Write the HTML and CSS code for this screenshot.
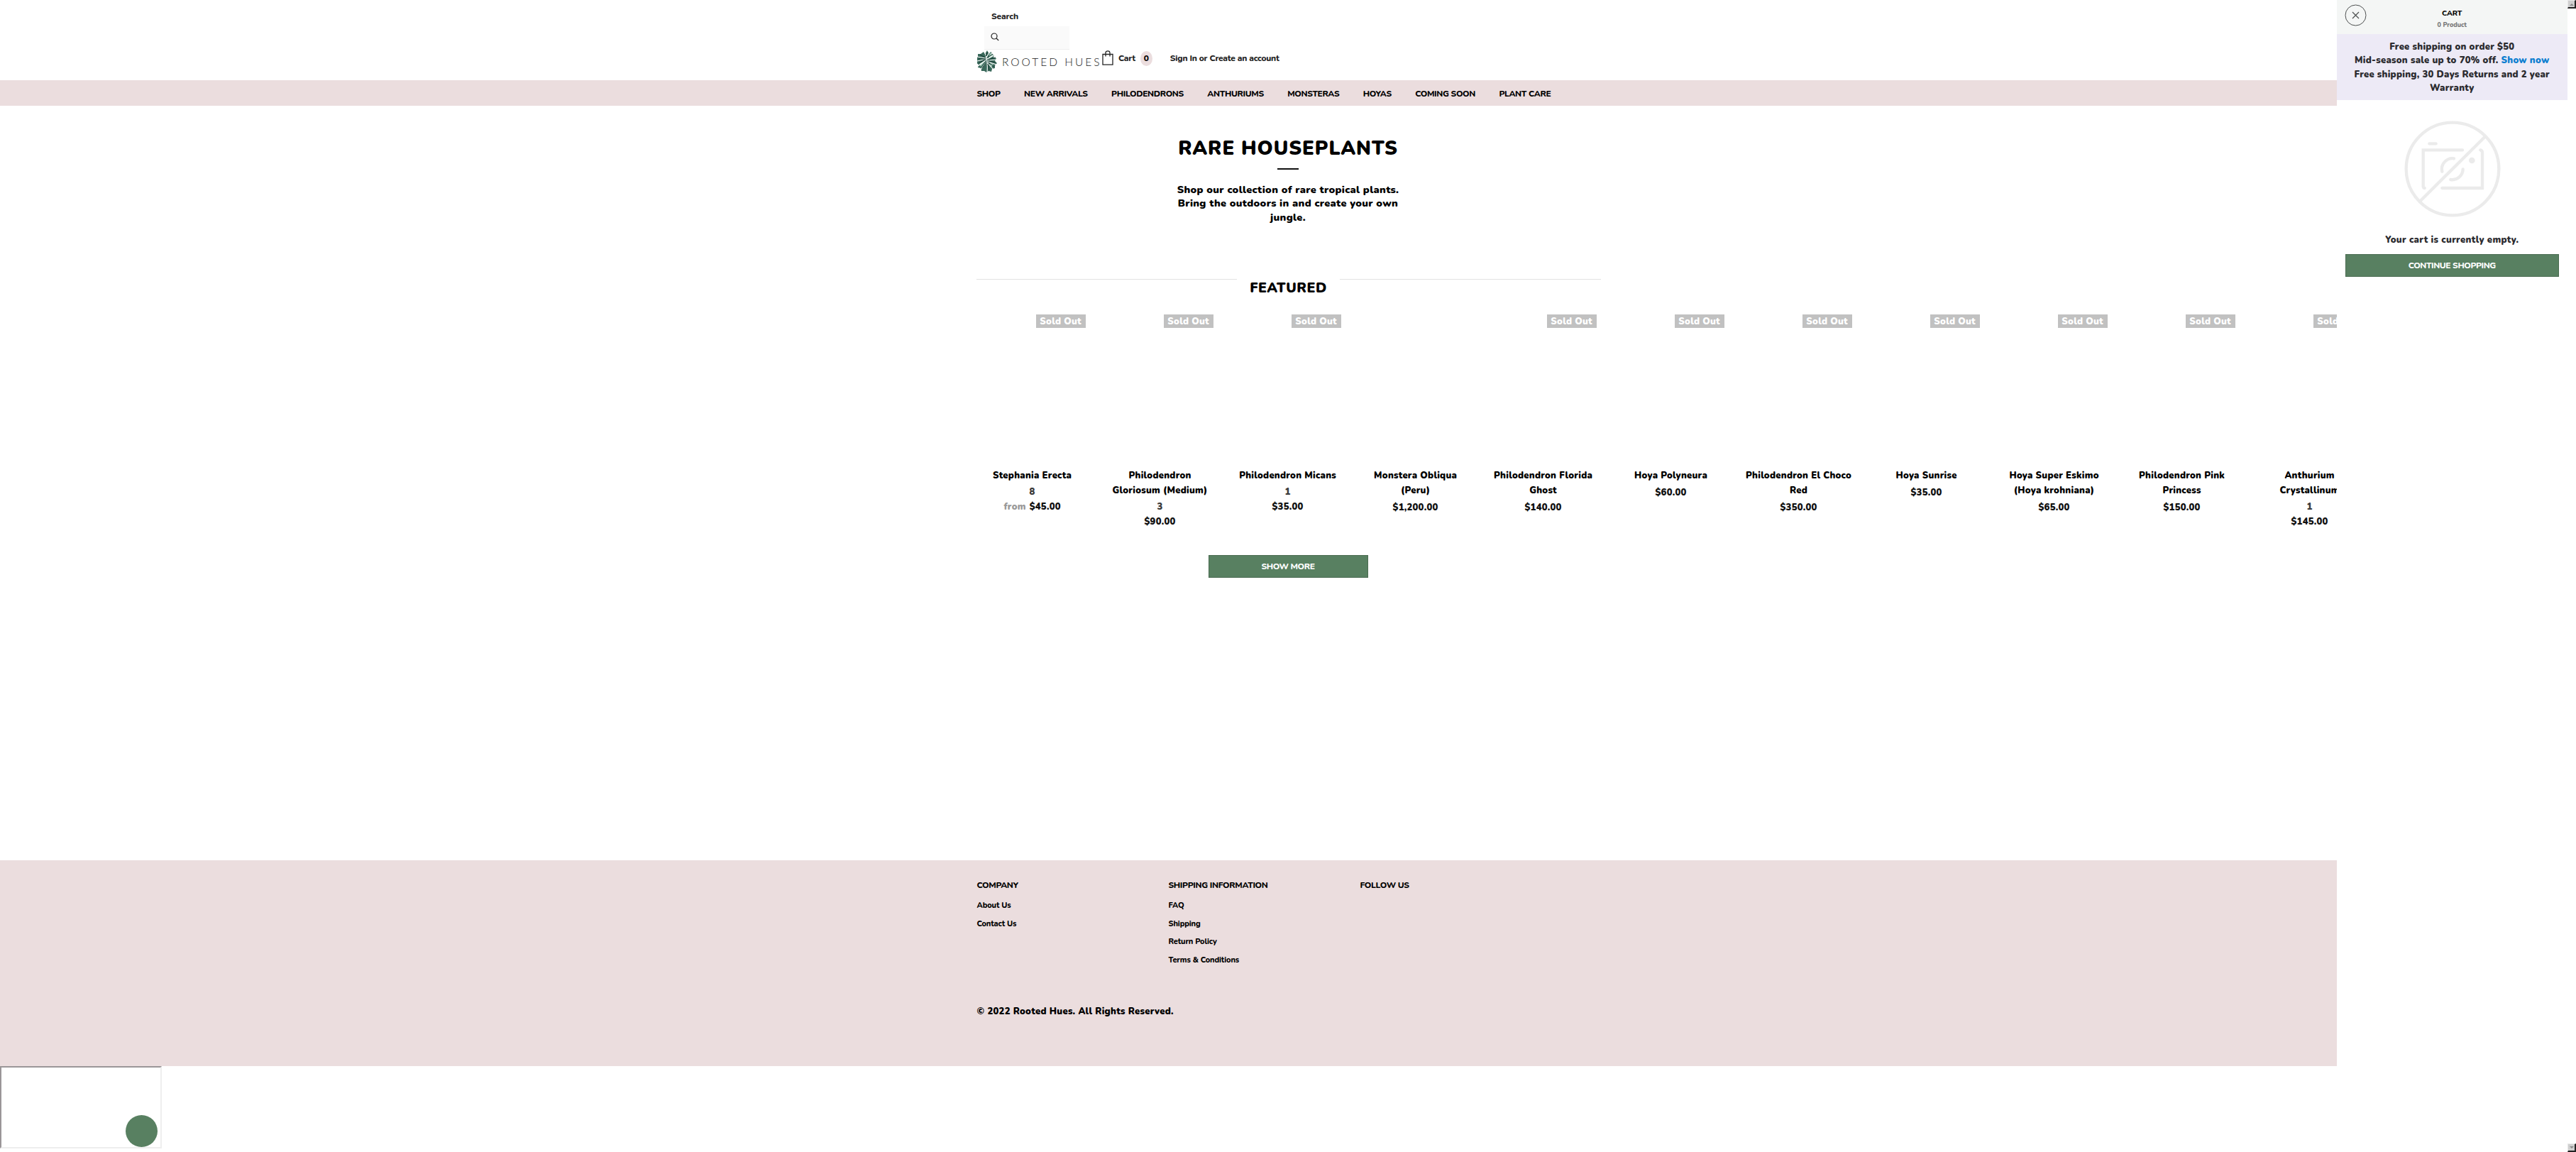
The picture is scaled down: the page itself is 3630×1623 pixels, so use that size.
FILE: index.html
```html
<!DOCTYPE html>
<html lang="en">
<head>
<meta charset="utf-8">
<title>Rooted Hues</title>
<link rel="stylesheet" href="styles.css">
</head>
<body>
<div class="layout">
  <div class="site">
    <header class="header">
      <div class="search">
        <div class="search-label">Search</div>
        <div class="search-field">
          <svg width="12" height="12" viewBox="0 0 12 12" fill="none" stroke="#222" stroke-width="1.2"><circle cx="5" cy="5" r="4"/><path d="M8 8l3.2 3"/></svg>
        </div>
      </div>
      <div class="header-row">
        <a class="logo">
          <svg width="28" height="31" viewBox="0 0 28 31">
            <path fill="#3a695b" d="M9 2l2 3 3-5 2 4 4-2 0 4 4 0-1 4 4 1-2 4 3 3-3 3 0 4-4 1-1 4-4-1-3 2-3-2-4 0-1-4-4-1 1-4-4-3 2-3-2-4 3-1 0-4 4 0z"/>
            <path fill="#a9cdbd" d="M18 3l5 5-7 4zM3 19l9-5-7 9zM19 24l4-4-5-3z"/>
            <path fill="none" stroke="#fff" stroke-width="1.1" d="M10 2c4 7 5 16 4 29M0 9l12 2M0 15l13-3M1 22l11-8M5 27l8-11M19 0l-6 10M25 6l-11 6M28 13l-13 1M27 20l-12-4M22 26l-7-8"/>
            <path fill="none" stroke="#173a33" stroke-width="1" d="M4 6l7 4M2 12l10 0M2 18l9-5M7 25l6-9M15 2l-3 6M22 5l-7 5M26 10l-10 3M26 17l-10-2M24 23l-8-6M17 28l-2-9"/>
          </svg>
          <span class="logo-text">ROOTED HUES</span>
        </a>
        <a class="cart-link">
          <svg width="16" height="21" viewBox="0 0 16 21" fill="none" stroke="#222" stroke-width="1.3"><path d="M1 5.5h14v14.7H1zM5 8.500V3.500a3 2.700 0 0 1 6 0v5"/></svg>
          <span>Cart</span>
          <span class="cart-count">0</span>
        </a>
        <div class="account"><a>Sign In</a> or <a>Create an account</a></div>
      </div>
    </header>
    <nav class="nav">
      <a>SHOP</a><a>NEW ARRIVALS</a><a>PHILODENDRONS</a><a>ANTHURIUMS</a><a>MONSTERAS</a><a>HOYAS</a><a>COMING SOON</a><a>PLANT CARE</a>
    </nav>
    <main class="main">
      <section class="hero">
        <h1>RARE HOUSEPLANTS</h1>
        <div class="rule"></div>
        <p>Shop our collection of rare tropical plants.<br>Bring the outdoors in and create your own<br>jungle.</p>
      </section>
      <h2 class="section-title"><span>FEATURED</span></h2>
      <div class="products">
        <article class="card"><div class="photo"><span class="badge">Sold Out</span></div><h3>Stephania Erecta</h3><div class="count">8</div><div class="price"><span class="from">from</span> $45.00</div></article>
        <article class="card"><div class="photo"><span class="badge">Sold Out</span></div><h3>Philodendron Gloriosum (Medium)</h3><div class="count">3</div><div class="price">$90.00</div></article>
        <article class="card"><div class="photo"><span class="badge">Sold Out</span></div><h3>Philodendron Micans</h3><div class="count">1</div><div class="price">$35.00</div></article>
        <article class="card"><div class="photo"></div><h3>Monstera Obliqua (Peru)</h3><div class="price solo">$1,200.00</div></article>
        <article class="card"><div class="photo"><span class="badge">Sold Out</span></div><h3>Philodendron Florida Ghost</h3><div class="price solo">$140.00</div></article>
        <article class="card"><div class="photo"><span class="badge">Sold Out</span></div><h3>Hoya Polyneura</h3><div class="price solo">$60.00</div></article>
        <article class="card"><div class="photo"><span class="badge">Sold Out</span></div><h3>Philodendron El Choco Red</h3><div class="price solo">$350.00</div></article>
        <article class="card"><div class="photo"><span class="badge">Sold Out</span></div><h3>Hoya Sunrise</h3><div class="price solo">$35.00</div></article>
        <article class="card"><div class="photo"><span class="badge">Sold Out</span></div><h3>Hoya Super Eskimo (Hoya krohniana)</h3><div class="price solo">$65.00</div></article>
        <article class="card"><div class="photo"><span class="badge">Sold Out</span></div><h3>Philodendron Pink Princess</h3><div class="price solo">$150.00</div></article>
        <article class="card"><div class="photo"><span class="badge">Sold Out</span></div><h3>Anthurium Crystallinum</h3><div class="count">1</div><div class="price">$145.00</div></article>
      </div>
      <a class="button show-more">SHOW MORE</a>
    </main>
    <footer class="footer">
      <div class="footer-cols">
        <div><h4>COMPANY</h4><a>About Us</a><a>Contact Us</a></div>
        <div><h4>SHIPPING INFORMATION</h4><a>FAQ</a><a>Shipping</a><a>Return Policy</a><a>Terms &amp; Conditions</a></div>
        <div><h4>FOLLOW US</h4></div>
      </div>
      <p class="copyright">© 2022 Rooted Hues. All Rights Reserved.</p>
    </footer>
    <div class="widget"><div class="bubble"></div></div>
  </div>
  <aside class="drawer">
    <div class="drawer-head">
      <svg class="close" width="31" height="31" viewBox="0 0 31 31" fill="none" stroke="#4c4f4f"><circle cx="15.500" cy="15.500" r="14.500"/><path stroke-width="1.200" d="M11 11l9 9M20 11l-9 9"/></svg>
      <div class="drawer-title">CART</div>
      <div class="drawer-count">0 Product</div>
    </div>
    <div class="promo">Free shipping on order $50<br>Mid-season sale up to 70% off. <a>Show now</a><br>Free shipping, 30 Days Returns and 2 year<br>Warranty</div>
    <svg class="no-photo" width="136" height="136" viewBox="322 509 408 408" fill="none" stroke="#ebebeb" stroke-width="13" stroke-linecap="round">
      <circle cx="526" cy="713" r="196"/>
      <path d="M388 850L662 578M568 633H402V786q0 8 6 8M644 633q8 2 8 10V794H482M428 606h28M482 724a45 45 0 0 1 50-55M570 714a45 45 0 0 1-52 44"/>
      <circle cx="608" cy="677" r="13" fill="#ebebeb" stroke="none"/>
    </svg>
    <p class="empty">Your cart is currently empty.</p>
    <a class="button continue">CONTINUE SHOPPING</a>
  </aside>
  <div class="scroll">
    <div class="scroll-btn"><svg width="6" height="4" viewBox="0 0 6 4"><path d="M0 4l3-3 3 3z" fill="#8a8a8a"/></svg></div>
    <div class="scroll-btn"><svg width="6" height="4" viewBox="0 0 6 4"><path d="M0 0l3 3 3-3z" fill="#8a8a8a"/></svg></div>
  </div>
</div>
</body>
</html>
```
FILE: styles.css
```css
* { box-sizing: border-box; }
body {
  margin: 0;
  background: #fff;
  color: #000;
  font: 900 13px/21px Nunito, "Open Sans", sans-serif;
  letter-spacing: .02em;
}
h1, h2, h3, h4, p { margin: 0; font-weight: inherit; font-size: inherit; }
svg { display: block; flex: none; }
.layout { display: grid; grid-template-columns: 3292.5px 325.5px 12px; height: 1623px; overflow: hidden; }
.site { overflow: hidden; }

.header { height: 113px; padding: 13px 0 0 1377px; color: #222; font-size: 12px; font-weight: 800; line-height: 20px; letter-spacing: -.02em; }
.search { padding-left: 10px; }
.search-label { padding-left: 10px; height: 24px; letter-spacing: -.01em; }
.search-field { display: flex; align-items: center; width: 120px; height: 33px; padding: 0 0 3px 9px; background: #fafafa; border-bottom: 1px solid #eee; }
.header-row { display: flex; align-items: flex-start; }
.logo { display: flex; width: 176px; padding-top: .5px; white-space: nowrap; }
.logo-text { margin: 6.500px 0 0 7px; font: 300 15.500px/20px Lato, sans-serif; letter-spacing: 3px; color: #222; }
.cart-link { display: flex; padding-top: 1px; }
.cart-link span { margin: 1px 0 0 7px; }
.cart-link .cart-count { width: 17px; height: 21px; margin: 1px 0 0 7px; border-radius: 50%; background: #ebddde; color: #000; text-align: center; line-height: 21px; letter-spacing: 0; }
.account { margin: 1.500px 0 0 25px; }

.nav { display: flex; gap: 33.4px; height: 36px; padding-left: 1376.5px; background: #ebddde; font-size: 12px; font-weight: 800; line-height: 38px; letter-spacing: -.029em; }

.main { height: 1063px; }
.hero { width: 880px; margin-left: 1375px; padding-top: 41.500px; text-align: center; }
.hero h1 { font-size: 27.500px; line-height: 36px; letter-spacing: .034em; }
.rule { width: 30px; height: 2px; margin: 10.500px auto 18.500px; background: #111; }
.hero p { font-size: 14.500px; line-height: 19.500px; letter-spacing: .021em; }
.section-title { display: flex; width: 880px; margin: 74.500px 0 0 1375.500px; font-size: 19.500px; line-height: 28px; letter-spacing: .026em; }
.section-title::before, .section-title::after { content: ""; flex: 1; height: 1px; margin-top: 2px; background: #e2e2e2; }
.section-title span { width: 145px; padding-top: 1px; text-align: center; }

.products { display: flex; margin: 23.500px 0 0 1364.600px; }
.card { flex: 0 0 180px; padding: 0 13px; text-align: center; }
.photo { display: flex; justify-content: flex-end; align-items: flex-start; height: 217px; padding-right: 2px; }
.badge { width: 70px; height: 19px; background: #c1c1c1; color: #fff; line-height: 20px; }
.count { margin-top: 2px; color: #3a3a3a; }
.price { color: #111; }
.price.solo { margin-top: 3px; }
.from { color: #999; margin-right: 1px; }
.button { display: block; height: 32px; border: 1px solid #4a6b51; background: #588061; color: #fff; text-align: center; font-size: 12px; font-weight: 800; line-height: 31px; letter-spacing: -.035em; }
.show-more { width: 225px; margin: 36px 0 0 1702.500px; }

.footer { height: 290px; padding: 24px 0 0 1376.500px; background: #ebddde; }
.footer-cols { display: grid; grid-template-columns: repeat(3, 270px); height: 168px; font-weight: 800; }
.footer h4 { font-size: 12px; line-height: 22px; margin-bottom: 5px; letter-spacing: -.029em; }
.footer-cols a { display: block; font-size: 11px; line-height: 25.500px; letter-spacing: -.012em; }
.copyright { margin-top: 11px; letter-spacing: .022em; }

.widget { display: flex; justify-content: flex-end; align-items: flex-end; width: 228px; height: 116px; padding-right: 4px; border: 2px solid; border-color: #9a9698 #eee #eee #9a9698; }
.bubble { width: 45px; height: 45px; border-radius: 50%; background: #588061; }

.drawer { text-align: center; color: #2c2c30; }
.drawer-head { position: relative; height: 48px; padding-top: 9px; background: #f4f6f5; }
.close { position: absolute; left: 11.500px; top: 6px; }
.drawer-title { color: #000; font-size: 10.500px; font-weight: 800; line-height: 20px; letter-spacing: -.01em; }
.drawer-count { color: #777; font-size: 9px; font-weight: 800; line-height: 13px; letter-spacing: 0; }
.promo { height: 93px; padding-top: 8.500px; background: #edeaf6; line-height: 19.500px; }
.promo a { color: #0d7fd0; }
.no-photo { margin: 28.500px auto 0 95px; }
.empty { margin-top: 22px; letter-spacing: .025em; }
.continue { width: 301.500px; height: 31.500px; margin: 9.500px auto 0; }

.scroll { display: flex; flex-direction: column; justify-content: space-between; }
.scroll-btn { display: flex; align-items: center; justify-content: center; height: 12px; border: 1px solid; border-width: 1px 2px 2px 1px; border-color: #e8e8e8 #222 #222 #e8e8e8; background: #d0d0d0; }
```
